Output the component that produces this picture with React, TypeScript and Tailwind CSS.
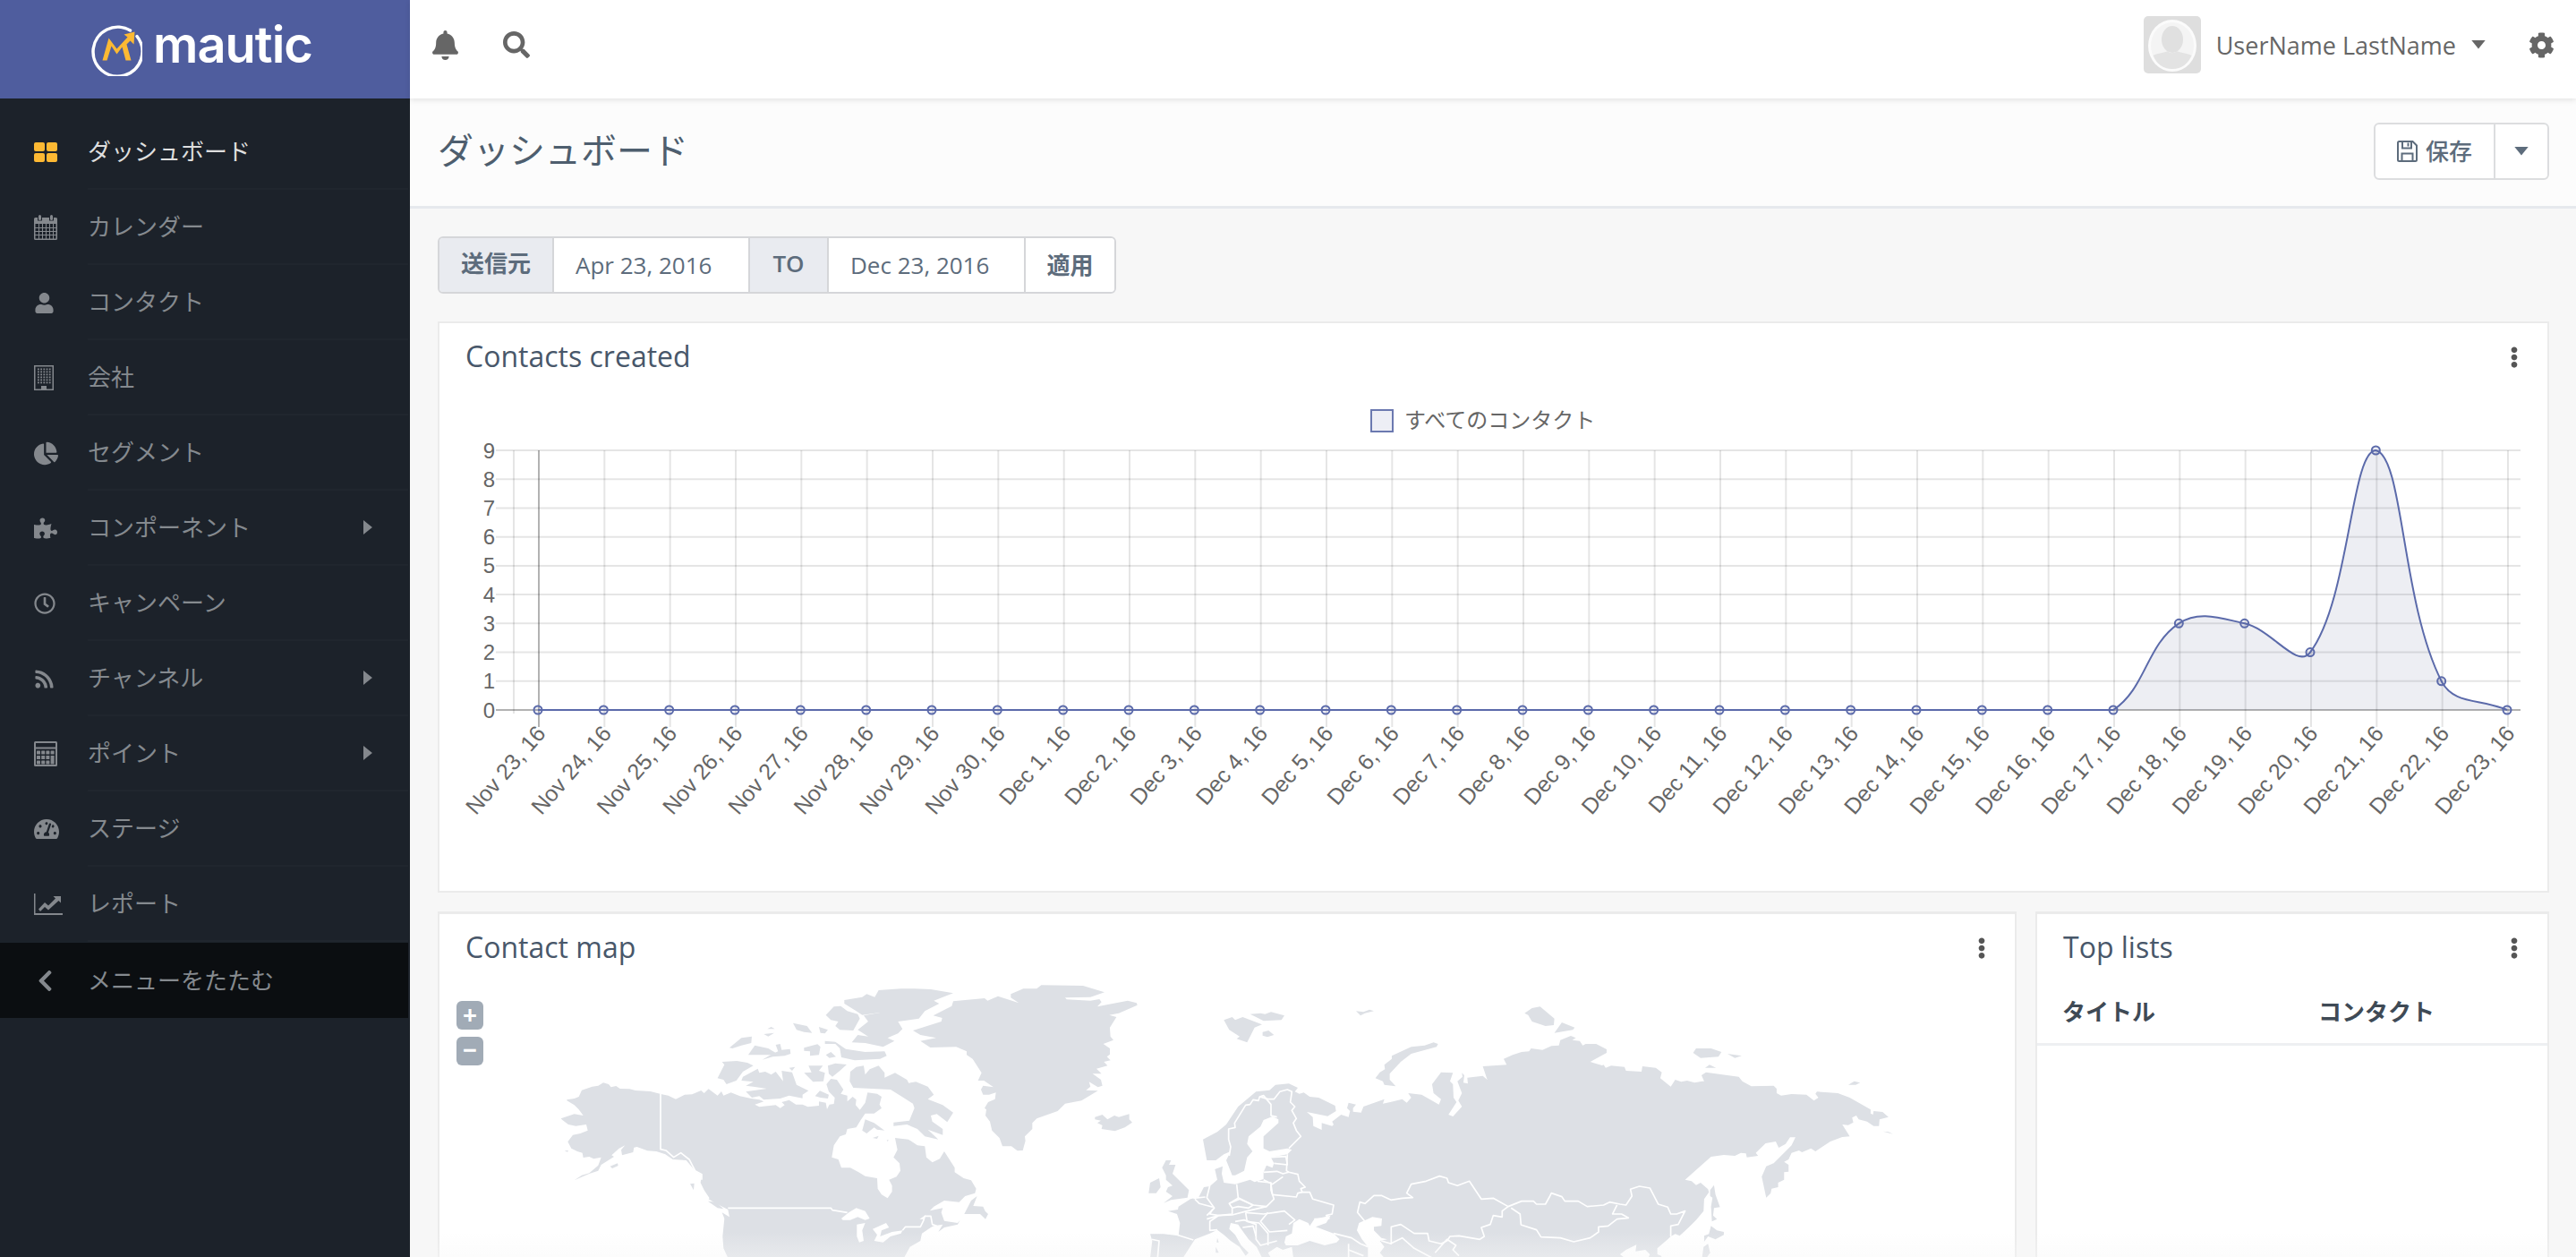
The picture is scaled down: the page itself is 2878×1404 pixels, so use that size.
import React from "react";
import { FaBell, FaSearch, FaCog, FaUser, FaChartPie, FaPuzzlePiece, FaRegClock, FaRss, FaTachometerAlt, FaChevronLeft, FaEllipsisV } from "react-icons/fa";

const GRAY = "#84888d";

function DashIcon() {
  return (
    <svg width="26" height="22" viewBox="0 0 26 22" fill="#fdb933">
      <rect x="0" y="0" width="12" height="10" rx="2" />
      <rect x="14" y="0" width="12" height="10" rx="2" />
      <rect x="0" y="12" width="12" height="10" rx="2" />
      <rect x="14" y="12" width="12" height="10" rx="2" />
    </svg>
  );
}
function CalendarIcon() {
  return (
    <svg width="26" height="28" viewBox="0 0 26 28" fill={GRAY}>
      <rect x="5" y="0" width="3" height="6" rx="1.5" />
      <rect x="18" y="0" width="3" height="6" rx="1.5" />
      <path fillRule="evenodd" d="M1.500 3H4v3.500h5V3h8v3.500h5V3h2.500A1.500 1.500 0 0 1 26 4.500v22a1.500 1.500 0 0 1-1.500 1.500h-23A1.500 1.500 0 0 1 0 26.500v-22A1.500 1.500 0 0 1 1.500 3zM1.500 10v16.500h23V10z" />
      {[5.500, 9.500, 13.500, 17.500, 21.500].map((x) => <rect key={x} x={x - 0.5} y="10" width="1" height="17" />)}
      {[14, 18, 22].map((y) => <rect key={y} x="1" y={y} width="24" height="1" />)}
    </svg>
  );
}
function BuildingIcon() {
  const cells: React.ReactNode[] = [];
  for (let r = 0; r < 6; r++) for (let c = 0; c < 5; c++) cells.push(<rect key={r + "-" + c} x={4 + c * 3.2} y={3.500 + r * 3} width="1.800" height="1.800" />);
  return (
    <svg width="22" height="28" viewBox="0 0 22 28" fill={GRAY}>
      <path fillRule="evenodd" d="M0 0h22v28H0zM1.500 1.500v25H8v-3.500h6v3.500h6.500v-25z" />
      {cells}
    </svg>
  );
}
function CalcIcon() {
  const cells: React.ReactNode[] = [];
  for (let r = 0; r < 3; r++) for (let c = 0; c < 4; c++) {
    if (c === 3 && r > 0) continue;
    cells.push(<rect key={r + "-" + c} x={3 + c * 5.200} y={10.500 + r * 5.500} width="4" height="4" rx="0.5" />);
  }
  return (
    <svg width="26" height="28" viewBox="0 0 26 28" fill={GRAY}>
      <path fillRule="evenodd" d="M1.500 0h23A1.500 1.500 0 0 1 26 1.500v25a1.500 1.500 0 0 1-1.500 1.500h-23A1.500 1.500 0 0 1 0 26.500v-25A1.500 1.500 0 0 1 1.500 0zM2 2v4.500h22V2zM2 8.500V26h22V8.500z" />
      {cells}
      <rect x="18.600" y="16" width="4" height="9.500" rx="0.5" />
    </svg>
  );
}
function ReportIcon() {
  return (
    <svg width="32" height="24" viewBox="0 0 32 24" fill={GRAY}>
      <path d="M0 0h1.500v22H32v2H0z" />
      <path d="M5 17.500 12 10l4 3.500L24 5.500l-2.500-2.500H30v7.500L27.500 8 16 18.500 12 15l-5 5z" />
    </svg>
  );
}
function SaveIcon() {
  return (
    <svg width="23" height="24" viewBox="0 0 23 24" fill="none" stroke="#5d6c7c" strokeWidth="2">
      <path d="M2.500 1h15L22 5.500v16a1.500 1.500 0 0 1-1.500 1.500h-18A1.500 1.500 0 0 1 1 21.500v-19A1.500 1.500 0 0 1 2.500 1z" />
      <path d="M6 1v7.500h10V1" />
      <path d="M12.500 2.500v4" />
      <path d="M5.500 23v-8.500h12V23" />
    </svg>
  );
}
function Caret({ dir = "right", color = GRAY, size = 16 }: { dir?: "right" | "down"; color?: string; size?: number }) {
  if (dir === "right") {
    return <svg width={size * 0.62} height={size} viewBox="0 0 10 16" fill={color}><polygon points="0,0 10,8 0,16" /></svg>;
  }
  return <svg width={size} height={size * 0.6} viewBox="0 0 16 10" fill={color}><polygon points="0,0 16,0 8,10" /></svg>;
}
function Logo() {
  return (
    <svg width="58" height="60" viewBox="100.500 19.500 58 60">
      <path d="M145 28.500A27.500 27.500 0 1 0 152.500 35" fill="none" stroke="#fff" strokeWidth="3.500" strokeLinecap="round" />
      <polygon fill="#fdb933" points="114,62 121,37 130,49 142,36 138,33 150,30 149,44 145,40 141,44 146,62 140,62 136,47 130,55 124,46 119,62" />
    </svg>
  );
}

const items: { label: string; icon: React.ReactNode; sub?: boolean; active?: boolean }[] = [
  { label: "ダッシュボード", icon: <DashIcon />, active: true },
  { label: "カレンダー", icon: <CalendarIcon /> },
  { label: "コンタクト", icon: <FaUser size={23} color={GRAY} /> },
  { label: "会社", icon: <BuildingIcon /> },
  { label: "セグメント", icon: <FaChartPie size={27} color={GRAY} /> },
  { label: "コンポーネント", icon: <FaPuzzlePiece size={26} color={GRAY} />, sub: true },
  { label: "キャンペーン", icon: <FaRegClock size={24} color={GRAY} /> },
  { label: "チャンネル", icon: <FaRss size={23} color={GRAY} />, sub: true },
  { label: "ポイント", icon: <CalcIcon />, sub: true },
  { label: "ステージ", icon: <FaTachometerAlt size={28} color={GRAY} /> },
  { label: "レポート", icon: <ReportIcon /> },
];

function Sidebar() {
  return (
    <aside className="w-[458px] shrink-0 bg-[#1c222a] flex flex-col">
      <div className="h-[110px] bg-[#4f5d9e] flex items-center pl-[101px] gap-[12px]">
        <Logo />
        <span className="font-['Inter',sans-serif] font-semibold text-[56px] leading-none text-white tracking-[-1px] mt-[-10px]">mautic</span>
      </div>
      <nav className="w-[456px] pt-[18px] flex flex-col">
        {items.map((it) => (
          <div key={it.label} className="flex h-[84px] items-stretch">
            <div className="w-[98px] shrink-0 pl-[38px] flex items-center">{it.icon}</div>
            <div className={"flex-1 flex items-center justify-between border-b-2 border-[#20262e] pr-[40px] text-[26px] " + (it.active ? "text-[#dedede]" : "text-[#858a8f]")}>
              <span>{it.label}</span>
              {it.sub && <Caret />}
            </div>
          </div>
        ))}
        <div className="flex h-[84px] items-stretch bg-[#0b0e11] mt-[1px]">
          <div className="w-[98px] shrink-0 pl-[37px] flex items-center"><FaChevronLeft size={27} color={GRAY} /></div>
          <div className="flex-1 flex items-center text-[26px] text-[#858a8f]">メニューをたたむ</div>
        </div>
      </nav>
    </aside>
  );
}

function TopBar() {
  return (
    <header className="relative z-10 h-[110px] shrink-0 bg-white shadow-[0_2px_6px_rgba(0,0,0,0.1)] flex items-center pl-[23px] pr-[24px] pb-[10px] text-[#666666]">
      <FaBell size={33} />
      <FaSearch size={30} className="ml-[48px]" />
      <div className="ml-auto flex items-center">
        <svg width="64" height="64" viewBox="0 0 64 64" className="rounded-[5px]">
          <rect width="64" height="64" fill="#dedede" />
          <ellipse cx="32" cy="33" rx="27" ry="29" fill="#fbfbfb" />
          <ellipse cx="32" cy="33" rx="24" ry="26" fill="#f4f4f4" />
          <ellipse cx="32" cy="26" rx="12" ry="15" fill="#e0e0e0" />
          <path d="M10.500 44c6-3 12-3 16.500-5 2 3 7 3 10 0 4.500 2 10.500 2 16.500 5-4 9-11 15-21.500 15S14.500 53 10.500 44z" fill="#e3e3e3" />
        </svg>
        <span className="ml-[17px] text-[27px] font-medium leading-none">UserName LastName</span>
        <span className="ml-[17px]"><Caret dir="down" color="#666666" /></span>
        <FaCog size={29} className="ml-[48px]" />
      </div>
    </header>
  );
}

function PageHeader() {
  return (
    <div className="h-[123px] shrink-0 bg-[#fcfcfc] border-b-[3px] border-[#e6e9ed] flex items-center justify-between pl-[31px] pr-[30px]">
      <h1 className="text-[40px] font-normal text-[#4e5e6e] leading-none mt-[-4px]">ダッシュボード</h1>
      <div className="flex h-[64px] w-[196px] bg-white border-2 border-[#dcdddf] rounded-[6px] text-[#5d6c7c] mt-[-2px]">
        <div className="w-[134px] flex items-center justify-center gap-[9px] border-r-2 border-[#dcdddf] text-[26px] font-medium">
          <SaveIcon />
          <span>保存</span>
        </div>
        <div className="flex-1 flex items-center justify-center"><Caret dir="down" color="#5d6c7c" /></div>
      </div>
    </div>
  );
}

function DateBar() {
  const label = "flex items-center justify-center bg-[#e9ebf0] font-semibold text-[26px] text-[#5d6c7c] pb-[4px]";
  const input = "flex items-center pl-[24px] text-[26px] text-[#5d6c7c] bg-white border-x-2 border-[#d5d6d9]";
  return (
    <div className="flex h-[64px] w-[758px] rounded-[6px] border-2 border-[#d5d6d9] overflow-hidden">
      <div className={label + " w-[126px]"}>送信元</div>
      <div className={input + " w-[221px]"}>Apr 23, 2016</div>
      <div className={label + " w-[86px]"}>TO</div>
      <div className={input + " w-[222px]"}>Dec 23, 2016</div>
      <div className="flex-1 flex items-center justify-center bg-white font-semibold text-[26px] text-[#5d6c7c]">適用</div>
    </div>
  );
}

function CardHead({ title }: { title: string }) {
  return (
    <div className="h-[76px] shrink-0 flex items-center justify-between pl-[29px] pr-[25px]">
      <h3 className="text-[32px] text-[#48576a] leading-none mt-[-2px]">{title}</h3>
      <FaEllipsisV size={24} color="#555555" />
    </div>
  );
}

const AXIS_L = 574;
const TOP = 503;
const ZERO = 793;
const STEP = (ZERO - TOP) / 9;
const X0 = 601;
const DX = 2200 / 30;
const values = [...Array(25).fill(0), 3, 3, 2, 9, 1, 0];
const labels = [
  ...[23, 24, 25, 26, 27, 28, 29, 30].map((d) => `Nov ${d}, 16`),
  ...Array.from({ length: 23 }, (_, i) => `Dec ${i + 1}, 16`),
];
const pts = values.map((v, i) => ({ x: X0 + i * DX, y: ZERO - v * STEP }));

function buildLine() {
  const t = 0.4;
  const ctrl = pts.map((p, i) => {
    const a = pts[Math.max(i - 1, 0)];
    const b = pts[Math.min(i + 1, pts.length - 1)];
    const d1 = Math.hypot(p.x - a.x, p.y - a.y);
    const d2 = Math.hypot(b.x - p.x, b.y - p.y);
    const s = d1 + d2 || 1;
    const fa = (t * d1) / s;
    const fb = (t * d2) / s;
    const clamp = (y: number) => Math.min(ZERO, Math.max(TOP, y));
    return {
      px: p.x - fa * (b.x - a.x),
      py: clamp(p.y - fa * (b.y - a.y)),
      nx: p.x + fb * (b.x - a.x),
      ny: clamp(p.y + fb * (b.y - a.y)),
    };
  });
  let d = `M${pts[0].x} ${pts[0].y}`;
  for (let i = 1; i < pts.length; i++) {
    d += `C${ctrl[i - 1].nx} ${ctrl[i - 1].ny} ${ctrl[i].px} ${ctrl[i].py} ${pts[i].x} ${pts[i].y}`;
  }
  return d;
}
const line = buildLine();

function Chart() {
  return (
    <svg viewBox="491 437 2355 558" width="2355" height="558" className="block">
      <rect x="1532" y="458" width="24" height="24" fill="#4e5d9d1a" stroke="#6b79b0" strokeWidth="2" />
      <text x="1569" y="478" fontSize="24" fill="#666666" fontFamily="'Noto Sans CJK JP', sans-serif">すべてのコンタクト</text>
      {Array.from({ length: 10 }, (_, i) => {
        const y = ZERO - i * STEP;
        return (
          <g key={i}>
            <line x1="554" x2="2816" y1={y} y2={y} stroke={i === 0 ? "rgba(0,0,0,0.3)" : "rgba(0,0,0,0.1)"} strokeWidth="2" />
            <text x="553" y={y + 8.500} textAnchor="end" fontSize="24" fill="#666666" fontFamily="'Liberation Sans', sans-serif">{i}</text>
          </g>
        );
      })}
      <line x1={AXIS_L} x2={AXIS_L} y1={TOP} y2={ZERO + 4} stroke="rgba(0,0,0,0.1)" strokeWidth="2" />
      {labels.map((l, i) => {
        const x = X0 + 1 + i * DX;
        return (
          <g key={l}>
            <line x1={x} x2={x} y1={TOP} y2={812} stroke={i === 0 ? "rgba(0,0,0,0.3)" : "rgba(0,0,0,0.1)"} strokeWidth="2" />
            <text x={x + 9} y={820} textAnchor="end" fontSize="25" fill="#666666" fontFamily="'Liberation Sans', sans-serif" transform={`rotate(-49 ${x + 9} 820)`}>{l}</text>
          </g>
        );
      })}
      <path d={`${line}L${pts[pts.length - 1].x} ${ZERO}L${pts[0].x} ${ZERO}Z`} fill="#4e5a851a" />
      <path d={line} fill="none" stroke="#5b6aaa" strokeWidth="2" />
      {pts.map((p, i) => <circle key={i} cx={p.x} cy={p.y} r="4.500" fill="#4e5d9d1a" stroke="#5b6aaa" strokeWidth="2" />)}
    </svg>
  );
}

const LAND = "#dde0e5";
const Land = ({ p }: { p: string }) => <polygon points={p} fill={LAND} />;
const Sea = ({ p }: { p: string }) => <polygon points={p} fill="#ffffff" />;
const Border = ({ p }: { p: string }) => <polyline points={p} fill="none" stroke="#ffffff" strokeWidth="5" strokeLinejoin="round" />;

function WorldMap() {
  return (
    <svg viewBox="491 1096 1760 308" width="1760" height="308" className="block">
      {/* crop A: North America */}
      <g transform="translate(600 1090) scale(0.3333)">
        <Land p="100,412 125,408 140,402 150,380 185,368 205,365 222,355 240,360 248,370 265,366 278,375 310,376 330,381 380,384 415,393 440,398 465,410 495,395 520,394 550,381 560,390 575,376 605,398 618,384 625,398 650,388 680,400 718,408 745,412 760,418 730,428 745,436 800,430 815,440 830,430 820,420 845,413 868,428 890,428 908,436 945,432 945,418 968,422 972,444 980,428 995,426 998,405 978,385 970,360 985,342 1005,345 1027,378 1018,392 1040,398 1040,418 1058,402 1070,412 1068,430 1082,446 1100,422 1108,388 1140,392 1155,402 1148,428 1155,440 1130,458 1100,458 1085,480 1070,505 1040,510 1035,528 1015,535 995,565 988,605 1010,612 1020,640 1050,640 1078,655 1100,668 1140,675 1142,710 1155,730 1175,742 1190,720 1190,700 1180,680 1205,670 1218,650 1215,625 1195,605 1208,580 1200,540 1245,545 1275,565 1300,568 1305,605 1325,622 1350,610 1365,585 1400,640 1400,655 1430,675 1455,682 1472,710 1468,725 1435,735 1415,755 1365,750 1330,770 1300,800 1282,812 1295,812 1310,785 1360,775 1355,790 1365,818 1410,825 1418,815 1410,830 1365,840 1345,855 1360,830 1330,835 1320,840 1290,860 1285,885 1250,905 1230,942 640,942 625,910 622,870 628,810 620,790 645,805 640,780 600,760 575,745 578,742 560,715 548,690 552,665 530,650 500,615 455,612 430,595 400,585 370,583 335,570 325,572 322,588 285,598 282,580 295,565 275,575 250,598 258,603 215,630 205,650 175,660 125,682 150,665 175,658 205,632 215,605 190,610 175,603 155,606 152,590 135,585 115,575 103,553 120,530 145,525 170,515 165,495 130,500 105,495 85,480 80,475 125,460 155,465 140,445 125,430 100,415" />
        <Sea p="1020,810 1045,790 1070,775 1100,785 1115,810 1100,815 1075,805 1050,815 1025,815" />
        <Sea p="1072,830 1100,825 1090,850 1095,885 1080,890 1072,870" />
        <Sea p="1125,845 1170,825 1180,840 1155,850 1150,870 1190,855 1225,850 1220,860 1185,870 1160,890 1130,885 1140,865" />
        <Land p="645,238 685,205 720,200 718,222 685,230 655,240" />
        <Land p="708,262 730,230 775,240 805,258 780,262" />
        <Land p="800,228 815,225 820,245 848,242 850,258 830,265 790,268 755,278 785,260 808,250" />
        <Land p="772,175 785,168 797,175" />
        <Land p="760,192 795,188 775,200" />
        <Land p="858,155 905,165 922,188 895,185 870,178" />
        <Land p="945,168 975,178 965,190 950,188" />
        <Land p="895,238 940,226 950,235 945,262 915,265 915,250 895,248" />
        <Land p="968,262 985,252 1002,268 980,272" />
        <Land p="965,215 1000,218 1035,242 1100,252 1165,250 1172,265 1150,275 1065,280 1020,270 1015,240 1000,225 965,225" />
        <Land p="1030,78 1090,68 1105,58 1132,68 1145,45 1220,40 1265,40 1320,42 1395,55 1330,80 1348,90 1300,115 1280,140 1210,150 1225,175 1210,190 1175,205 1198,215 1160,235 1100,222 1055,220 1075,195 1110,200 1075,178 1110,150 1095,130 1150,120 1090,128 1070,115 1030,90" />
        <Land p="968,128 995,100 1018,98 1040,115 1075,125 1082,140 1060,180 1015,178 1000,165 1010,150 985,145" />
        <Land p="605,340 628,295 620,285 670,282 705,288 725,298 690,318 668,348 635,360 625,345" />
        <Land p="690,335 740,308 745,322 765,318 785,328 800,318 825,350 820,315 855,320 870,362 910,382 890,395 890,407 845,398 815,408 760,412 745,400 720,405 700,385 770,375 725,368 700,365 725,352 685,348" />
        <Land p="895,322 920,320 910,298 958,298 945,315 965,322 960,350 925,352" />
        <Land p="845,305 865,302 855,315" />
        <Land p="975,298 1000,290 1038,294 1015,315 990,335 978,325" />
        <Land p="932,400 948,382 978,395 975,408 950,405" />
        <Land p="1048,350 1050,318 1070,302 1095,298 1100,328 1115,310 1145,298 1165,322 1165,338 1200,322 1240,345 1246,356 1270,352 1310,368 1330,395 1310,410 1360,430 1395,455 1375,487 1340,460 1320,465 1325,485 1360,510 1360,530 1310,512 1345,545 1300,535 1275,510 1240,495 1195,500 1195,488 1248,482 1265,440 1260,425 1220,400 1185,378 1060,372" />
        <Sea p="1210,430 1230,425 1230,440 1212,445" />
        <Land p="1090,515 1100,478 1130,490 1165,515 1140,512 1130,505 1105,525" />
        <Land p="1125,540 1145,533 1140,543" />
        <Land p="1172,548 1178,545 1176,552" />
        <Land p="245,635 270,625 272,633 252,642" />
        <Land p="92,583 105,582 102,587" />
        <Land p="573,752 600,755 625,778 605,775" />
        <Land p="513,694 527,692 525,715" />
        <Border p="414,392 414,578 432,582 458,605 482,590 510,612 530,650 552,662 552,680" />
        <Border p="640,775 985,775 990,782 1040,790" />
        <Border p="1225,850 1235,838 1285,838 1295,818 1300,802 1320,802 1325,830 1340,835" />
      </g>
      {/* crop B: Greenland, Iceland */}
      <g transform="translate(1000 1090) scale(0.3333)">
        <Land p="60,180 155,150 158,138 128,130 190,98 195,82 300,72 310,80 345,65 415,88 388,70 388,58 430,40 475,40 490,28 630,30 702,52 655,68 570,70 575,76 655,80 685,75 692,85 678,100 780,80 810,88 812,95 750,122 718,128 742,135 720,170 722,200 732,212 698,225 720,240 720,260 710,268 722,280 700,285 712,298 675,308 692,325 662,325 690,345 695,365 680,370 650,352 655,368 640,380 680,382 625,415 570,425 545,450 475,475 460,490 460,510 435,535 437,550 428,582 410,583 390,568 360,568 350,540 325,515 318,485 303,465 306,445 300,440 312,420 335,410 338,388 315,395 295,395 288,378 295,365 330,370 298,348 278,348 290,322 260,275 240,262 240,250 205,235 118,237 85,215 138,205 85,195" />
        <Land p="670,470 695,462 712,478 735,465 750,470 785,460 785,478 795,488 770,505 737,517 692,510 695,498 678,490 690,482 670,478" />
        <Land p="232,795 255,750 275,735 262,768 295,770 302,785 312,795 303,812 285,795" />
      </g>
      {/* crop C + D: Eurasia */}
      <g transform="translate(1280 1090) scale(0.3333)">
        <Land p="262,145 290,135 300,145 325,135 390,160 365,170 350,200 340,220 305,208 315,200 280,178" />
        <Land p="350,125 385,122 400,125 420,118 465,130 455,145 395,148 370,135" />
        <Land p="392,185 412,180 430,195 408,202 392,197" />
        <Land p="705,115 730,118 750,110 765,115 735,122 720,130" />
        <Land p="770,340 785,320 802,310 800,295 825,275 825,265 890,235 935,230 965,220 980,225 975,235 890,258 855,285 818,325 818,345 838,367 800,362 795,350" />
        <Land p="192,545 240,520 270,495 310,435 370,385 415,380 435,362 480,358 510,372 500,385 515,392 530,388 550,402 580,405 635,432 638,450 610,467 540,453 560,470 562,500 590,513 590,490 625,500 630,495 625,485 655,462 680,470 685,450 675,440 680,422 705,428 695,440 695,452 722,455 730,435 800,410 795,425 820,420 860,410 875,422 890,405 880,390 925,395 983,428 990,410 965,390 960,360 990,320 1030,322 1020,350 1030,360 1032,405 1042,420 1015,462 1030,468 1060,435 1048,415 1060,390 1045,350 1062,335 1060,322 1068,330 1065,355 1080,358 1078,338 1130,332 1145,345 1130,300 1210,295 1200,275 1230,262 1260,252 1285,250 1292,240 1330,245 1360,232 1385,230 1390,212 1425,198 1442,205 1430,212 1455,215 1465,230 1475,225 1510,225 1545,243 1545,255 1490,285 1530,297 1535,295 1542,305 1560,298 1605,302 1610,315 1662,318 1665,300 1710,305 1730,320 1725,340 1760,368 1775,345 1795,352 1815,348 1840,355 1865,350 1872,350 1863,330 1878,320 1988,335 2000,350 2030,367 2105,365 2115,375 2115,390 2130,398 2165,393 2215,395 2240,415 2255,405 2245,392 2250,385 2320,390 2360,405 2430,445 2430,458 2438,462 2440,450 2470,453 2490,470 2460,478 2458,500 2440,500 2418,485 2390,478 2382,465 2368,472 2372,488 2355,497 2335,495 2360,535 2335,537 2295,552 2245,585 2230,575 2200,588 2190,582 2165,590 2155,612 2140,620 2155,630 2155,653 2140,655 2140,680 2120,690 2120,705 2098,710 2095,725 2080,740 2065,670 2080,635 2105,625 2150,580 2165,565 2178,538 2160,538 2145,560 2122,573 2112,552 2078,558 2045,590 2053,600 2015,605 2012,592 1995,590 1975,600 1938,597 1895,603 1808,680 1830,685 1845,698 1860,690 1885,712 1888,722 1872,745 1870,785 1845,815 1820,840 1790,868 1775,862 1760,870 1750,880 1715,910 1715,930 1728,935 1730,942 495,942 490,905 460,915 440,905 410,925 420,942 390,942 372,905 345,880 320,845 310,830 285,825 280,845 300,865 320,900 345,925 335,935 315,905 285,885 262,865 240,848 215,860 165,880 125,942 15,942 22,885 15,862 60,862 110,868 115,825 105,795 75,785 108,780 110,770 150,745 178,738 195,705 215,702 240,680 232,645 258,635 255,660 262,690 300,695 350,680 365,688 395,678 395,655 405,632 425,640 430,625 420,605 475,595 490,580 475,575 415,585 395,575 395,535 445,490 445,478 425,468 395,480 385,502 345,535 340,560 358,585 340,605 330,650 300,665 290,665 270,615 285,585 262,595 235,615 205,615" />
        <Land p="55,640 68,615 85,615 78,630 100,630 90,660 115,685 145,715 140,740 85,748 60,758 90,735 68,720 75,705 90,700 68,680 68,665" />
        <Land p="10,725 15,690 45,675 50,705 35,725" />
        <Land p="240,875 245,890 238,890" />
        <Land p="235,905 245,925 235,925" />
        <Sea p="708,850 715,825 760,805 792,810 790,835 765,838 765,850 790,875 810,880 785,885 800,905 785,925 800,942 745,942 745,905 725,880" />
        <Sea p="470,870 490,860 495,825 515,812 545,825 550,835 565,812 600,805 620,800 605,825 570,838 630,860 650,880 640,890 600,900 550,885 510,900 470,900 465,890" />
        <Sea p="1590,930 1610,915 1645,898 1642,920 1675,915 1690,930 1685,942 1605,942" />
        <g>
          <Land p="1892,715 1905,698 1910,730 1925,772 1905,775 1902,800 1915,812 1898,820 1895,770 1900,740 1892,735" />
          <Land p="1895,835 1915,850 1938,855 1938,865 1910,880 1885,870 1872,888 1872,868 1888,862" />
          <Land p="1870,905 1885,895 1892,925 1880,942 1865,942" />
          <Land p="1270,122 1295,105 1322,100 1370,140 1368,162 1340,165 1295,150 1282,128" />
          <Land p="1370,188 1395,153 1438,170 1432,178" />
          <Land p="1835,255 1845,240 1895,240 1930,252 1920,268 1860,272" />
          <Land p="1950,258 1998,265 1975,272" />
          <Land p="1875,305 1890,295 1912,305" />
          <Land p="2355,362 2375,350 2395,355 2380,362" />
          <Land p="2472,518 2505,527 2490,520" />
        </g>
        <Border p="280,600 285,570 278,545 278,510 300,505 298,490 335,430 350,428 360,412 378,415 382,402 395,398 420,428 420,465 440,470" />
        <Border p="382,402 410,410 430,410 450,385 475,378 490,385 485,420 500,435 490,448 505,475 495,490 505,515 520,535 480,575" />
        <Border p="420,605 470,602 475,630 430,625" />
        <Border p="475,595 472,650 480,655 510,662 515,685 535,705 520,710 525,722 550,722 560,745 630,765 625,795 605,800 615,810 565,812" />
        <Border p="395,655 440,652 460,660 480,655" />
        <Border p="395,680 425,695 460,670" />
        <Border p="420,695 425,730 505,738 510,725 525,722" />
        <Border p="305,695 310,740 360,765 405,770 430,745 420,715 420,690 375,685" />
        <Border p="215,700 205,740 230,775 205,800" />
        <Border p="225,778 215,795 245,800 290,795 290,775 280,760 310,742" />
        <Border p="280,760 315,745 360,765 345,775 310,770 290,775" />
        <Border p="245,800 290,798 340,785 405,770" />
        <Border p="335,790 395,795 430,790 465,785 500,815 480,830" />
        <Border p="410,790 385,820 415,855 475,850" />
        <Border p="335,790 340,820 380,825 410,860 410,900" />
        <Border p="300,820 330,815 370,830 370,880 385,900 440,885" />
        <Border p="325,840 360,835 370,870" />
        <Border p="165,745 180,760 225,772" />
        <Border p="160,742 200,738" />
        <Border p="205,812 245,800 215,820 215,850 240,848" />
        <Border p="105,865 160,882" />
        <Border p="20,880 45,885 40,942" />
        <Border p="630,860 690,875 720,895 745,905" />
        <Border p="680,895 680,942" />
        <Border p="680,915 730,935" />
        <Border p="735,820 710,790 718,755 735,760 765,733 790,733 822,748 860,742 895,740 875,725 890,695 940,685 985,668 1010,675 1015,690 1045,700 1085,685 1125,745 1165,742 1215,770" />
        <Border p="1215,770 1195,785 1195,805 1165,800 1155,830 1125,840 1135,870 1120,880 1050,868 1020,870 1010,885 990,895 950,885 945,860 900,860 855,830 823,838 823,895 790,885" />
        <Border p="820,895 860,875 900,910 960,942" />
        <Border p="970,925 1010,880 1040,900 1030,915 1050,935" />
        <Border p="1215,770 1260,752 1300,752 1310,762 1340,762 1355,735 1360,725 1395,737 1405,752 1450,752 1480,770 1535,765 1555,755 1590,762 1610,765 1630,735 1625,712 1655,702 1690,708 1718,762 1750,772 1760,795 1780,795 1808,785 1785,830 1760,835 1760,870" />
        <Border p="1580,765 1565,795 1595,795 1618,808 1580,812 1550,835 1518,838 1518,855 1490,875 1435,888 1390,875 1325,872 1310,848 1260,832 1258,830 1255,795 1225,775" />
      </g>
    </svg>
  );
}

export default function App() {
  return (
    <div className="relative flex h-[1404px] w-[2878px] overflow-hidden font-['Open_Sans','Noto_Sans_CJK_JP',sans-serif]">
      <Sidebar />
      <main className="flex-1 min-w-0 flex flex-col bg-[#f7f7f7]">
        <TopBar />
        <PageHeader />
        <div className="pt-[31px] pl-[31px] pr-[30px] flex flex-col">
          <DateBar />
          <section className="mt-[31px] bg-white border-2 border-[#ebebeb] h-[638px]">
            <CardHead title="Contacts created" />
            <Chart />
          </section>
          <div className="mt-[21px] flex gap-[21px] h-[500px]">
            <section className="relative w-[1764px] bg-white border-2 border-[#ebebeb] border-t-[3px]">
              <CardHead title="Contact map" />
              <WorldMap />
              <div className="absolute left-[19px] top-[97px] flex flex-col gap-[8px]">
                <div className="w-[30px] h-[32px] rounded-[6px] bg-[#a1abb6] text-white text-[28px] font-bold leading-[30px] text-center">+</div>
                <div className="w-[30px] h-[32px] rounded-[6px] bg-[#a1abb6] text-white text-[28px] font-bold leading-[28px] text-center">−</div>
              </div>
            </section>
            <section className="w-[574px] bg-white border-2 border-[#ebebeb] border-t-[3px]">
              <CardHead title="Top lists" />
              <div className="flex items-center h-[72px] border-b-[3px] border-[#eef0f2] font-semibold text-[26px] text-[#3f4a55] pl-[28px] mt-[-1px]">
                <span className="w-[286px]">タイトル</span>
                <span>コンタクト</span>
              </div>
            </section>
          </div>
        </div>
      </main>
      <div className="absolute left-[458px] right-0 top-[1376px] h-[28px] bg-gradient-to-b from-transparent to-[#f7f7f7]/40 pointer-events-none" />
    </div>
  );
}
